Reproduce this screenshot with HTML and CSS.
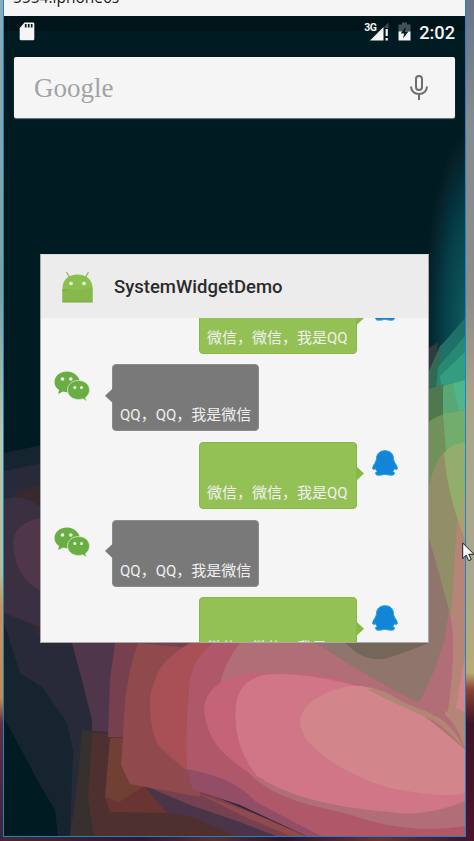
FILE: index.html
```
<!DOCTYPE html>
<html lang="zh-CN">
<head>
<meta charset="utf-8">
<title>SystemWidgetDemo</title>
<link rel="stylesheet" href="styles.css">
</head>
<body>
<svg class="defs" width="0" height="0" aria-hidden="true">
  <symbol id="wechat" viewBox="0 0 36 31">
    <path fill="#69ae42" d="M13 .5C6 .5.5 5 .5 11c0 3.500 1.800 6.200 4.600 8L4 23l5-2.500c1.500.5 3 .7 5 .7L26 11C25 5 19.500.5 13 .5z"/>
    <path fill="#69ae42" stroke="#d9e8d0" stroke-width=".8" d="M24.500 9.500C18 9.500 13.500 13.700 13.500 19s4.700 9.500 11 9.500c1.500 0 3-.3 4.300-.7l3.700 2.200-1-3.500c2.500-1.700 4-4.400 4-7.500 0-5.300-4.800-9.500-11-9.500z"/>
    <g fill="#f5f5f5"><circle cx="8.500" cy="8" r="1.800"/><circle cx="16.800" cy="8" r="1.800"/><circle cx="20.800" cy="16.500" r="1.500"/><circle cx="27.500" cy="16.500" r="1.500"/></g>
  </symbol>
  <symbol id="qq" viewBox="0 0 26 26">
    <path fill="#1285d8" stroke="#20a2dc" d="M13 .7C7.800.7 4.500 4 4.500 8.500c0 2-1 3.300-1.800 5C1.300 15.500.3 17.500.8 19c.5 1 1.800.2 2.700-.5.3 1.200.8 2.200 1.700 3-1.300.6-2 1.500-1.600 2.500.6 1.300 3 1.300 5.400 1.100L13 24.300l4 .8c2.400.2 4.800.2 5.400-1.100.4-1-.3-1.900-1.600-2.500.9-.8 1.400-1.800 1.700-3 .9.700 2.200 1.500 2.700.5.5-1.500-.5-3.500-1.900-5.500-.8-1.700-1.800-3-1.800-5C21.500 4 18.200.7 13 .7z"/>
  </symbol>
</svg>

<div class="desktop">
  <div class="edge edge-left"></div>
  <div class="window">
    <svg class="wallpaper" viewBox="4 16 461 820" preserveAspectRatio="none" aria-hidden="true">
      <defs>
        <radialGradient id="teal">
          <stop offset="0" stop-color="#187070"/>
          <stop offset=".3" stop-color="#0c5357"/>
          <stop offset=".6" stop-color="#063f48"/>
          <stop offset=".8" stop-color="#032c36"/>
          <stop offset=".9" stop-color="#082229"/>
          <stop offset="1" stop-color="#001b21"/>
        </radialGradient>
      </defs>
      <rect x="4" y="16" width="461" height="820" fill="#001b21"/>
      <rect x="4" y="16" width="461" height="15" fill="#00151a"/>
      <path fill="#15242f" d="M4 453L42 445V643L300 640V836H58L55 810 40 785 24 755 4 718z"/>
      <path fill="#282a3a" d="M4 471L42 463V643H300V836H70L73 750 67 723 43 688 20 673 4 622z"/>
      <path fill="#37292f" d="M15 494L42 483V642L20 605z"/>
      <path fill="#3b2f42" d="M4 500Q20 492 42 508V643H200V836H92V720L82 680 72 643 48 640 40 627 4 613z"/>
      <path fill="#50364a" d="M42 518Q13 522 13 545 16 580 42 591z"/>
      <path fill="#50364a" d="M72 643L82 680 92 720V750H150V643z"/>
      <path fill="#36302f" d="M82 730L108 732V836H70L76 795z"/>
      <path fill="#4e3030" d="M92 733H125L190 800 240 812V836H94L88 800z"/>
      <path fill="#77404f" d="M115 643H200V740L108 737 110 680z"/>
      <path fill="#704034" d="M110 738H130L155 790 118 803 105 797z"/>
      <path fill="#6a3433" d="M105 797L118 803 145 785 165 795 170 813 110 812z"/>
      <path fill="#4a3447" d="M143 785L220 800 300 836H235L195 818 167 813z"/>
      <path fill="#75404f" d="M143 785L200 790 270 820 305 836H276L240 822 190 805z"/>
      <path fill="#90494c" d="M138 643Q124 680 123 738L121 765 130 784 200 797 210 650z"/>
      <path fill="#90494c" d="M195 792L250 812 306 836H290L245 817z"/>
      <path fill="#a85055" d="M190 643Q160 660 155 680 150 692 150 702 150 730 158 745L174 760 190 773 240 680V643z"/>
      <path fill="#934d66" d="M187 768L240 780 325 836H306L240 805 192 789z"/>
      <path fill="#ae586a" d="M213 643Q190 660 189 690 185 730 187 769 235 778 255 801 280 815 321 836H465V643z"/>
      <path fill="#b16e77" d="M240 643Q222 665 218 695L240 760Q255 790 310 805 350 814 370 821 420 834 465 826V643z"/>
      <path fill="#c56479" d="M250 673Q205 680 204 710 207 742 233 761 260 785 320 800L380 806 400 700 330 676z"/>
      <path fill="#d07686" d="M275 674Q240 675 236 705 232 745 257 776 300 805 390 812 425 818 465 801V755L420 713Q350 674 275 674z"/>
      <path fill="#d2858b" d="M350 686Q305 695 300 720 300 737 318 751 345 775 390 788 445 799 465 793V750Q430 718 405 704 375 684 350 686z"/>
      <path fill="#8f756c" d="M316 643Q370 679 419 703 448 648 449 610V500H410V643z"/>
      <path fill="#746659" d="M345 643L357 653Q375 663 390 657 412 650 429 643z"/>
      <path fill="#b08774" d="M366 689Q382 687 400 701L430 713Q453 723 465 750 445 727 432 720 400 706 366 689z"/>
      <path fill="#b58678" d="M449 560L465 540V750Q458 725 445 715z"/>
      <path fill="#b16e77" d="M449 590Q458 640 448 711L434 716 419 703Q443 660 449 610z"/>
      <path fill="#d18489" d="M465 655L456 708 465 712z"/>
      <ellipse cx="475" cy="330" rx="52" ry="205" fill="url(#teal)"/>
      <path fill="#2d3c3e" d="M429 348L438 342 436 370 429 380z"/>
      <path fill="#326954" d="M429 371L440 346 450 337V460H429z"/>
      <path fill="#1f7069" d="M441 346L465 318V390L440 375z"/>
      <path fill="#278874" d="M438 367L465 336V400L436 390z"/>
      <path fill="#349c80" d="M440 376L465 352V410L443 400z"/>
      <path fill="#4e794f" d="M429 389L444 384V430L429 425z"/>
      <path fill="#57a875" d="M443 386L465 380V430L443 425z"/>
      <path fill="#50b58a" d="M453 384L465 380V410L460 415z"/>
      <path fill="#71905a" d="M429 422Q437 414 465 410V643H429z"/>
      <path fill="#73ad6d" d="M443 414L465 410V460L447 462z"/>
      <path fill="#93ad6c" d="M443 454Q452 443 465 442V545H450z"/>
      <path fill="#928e68" d="M429 487Q434 462 444 452 447 490 458 520L465 545V643H449L429 560z"/>
      <path fill="#ac9f71" d="M465 485V540L459 520z"/>
      <path fill="#8f756c" d="M429 538Q441 580 449 610 448 625 446 643H429z"/>
      <path fill="#b58678" d="M457 520L465 540V643H449L453 590z"/>
      <path fill="#b16e77" d="M449 610Q453 625 453 643H444z"/>
    </svg>

    <div class="titlebar"><span class="window-title">5554:iphone6s</span></div>
    <div class="statusbar">
      <svg class="sd" width="16" height="19" viewBox="0 0 16 19"><path fill="#f5f5f5" d="M5.500.5H14a1.300 1.300 0 0 1 1.300 1.300V17A1.300 1.300 0 0 1 14 18.300H2A1.300 1.300 0 0 1 .7 17V6z"/><path stroke="#001b21" stroke-width="1.700" d="M6.700 2v3.500M9.700 2v3.500M12.700 2v3.500"/></svg>
      <span class="network">3G</span>
      <svg class="signal" width="19" height="19" viewBox="0 0 19 19"><path fill="#394a50" d="M18.500.5V6h-4V4.500z"/><path fill="#f5f5f5" d="M0 18.500L13.500 5v13.500z"/><path fill="#f5f5f5" d="M15.600 7h2.200v7h-2.200zM15.600 16h2.200v2.500h-2.200z"/></svg>
      <svg class="battery" width="13" height="19" viewBox="0 0 13 19"><path fill="#455056" d="M.5 2.500H4V.5h5v2h3.500V10H.5z"/><path fill="#f5f5f5" d="M.5 9.500h12v9H.5z"/><path fill="#001b21" d="M8 4.500L2.700 11.500h3.500l-1.200 5 5.500-7H7z"/></svg>
      <span class="clock">2:02</span>
    </div>
    <div class="search">
      <span class="logo">Google</span>
      <svg class="mic" width="18" height="25" viewBox="0 0 18 25" fill="none" stroke="#6d6d6d"><rect x="6" y="1" width="6" height="14" rx="3" stroke-width="2"/><path stroke-width="2" d="M1 11.500c0 4.500 3.500 7.500 8 7.500s8-3 8-7.500M9 19v6"/></svg>
    </div>

    <div class="card">
      <div class="card-head">
        <svg width="31" height="32" viewBox="0 0 31 32"><path stroke="#8fb85f" stroke-width="1.300" d="M4.500 1L8 7M26.500 1L23 7"/><path fill="#8cc04e" d="M.5 31V17C.5 8.500 7 3.500 15.500 3.500S30.500 8.500 30.500 17V31z"/><path fill="#86b84b" d="M.5 19L13 19.500 30.500 16V31H.5z"/><path fill="#78a743" d="M.5 18.500l13 .3-13 1zM.5 30.500h30v1H.5z"/><g fill="#f4f8ee"><circle cx="9" cy="12.500" r="1.800"/><circle cx="22" cy="12.500" r="1.800"/></g></svg>
        <span class="card-title">SystemWidgetDemo</span>
      </div>
      <div class="chat">
        <div class="row mine"><div class="bubble">微信，微信，我是QQ</div><svg class="avatar"><use href="#qq"/></svg></div>
        <div class="row"><svg class="avatar"><use href="#wechat"/></svg><div class="bubble">QQ，QQ，我是微信</div></div>
        <div class="row mine"><div class="bubble">微信，微信，我是QQ</div><svg class="avatar"><use href="#qq"/></svg></div>
        <div class="row"><svg class="avatar"><use href="#wechat"/></svg><div class="bubble">QQ，QQ，我是微信</div></div>
        <div class="row mine"><div class="bubble">微信，微信，我是QQ</div><svg class="avatar"><use href="#qq"/></svg></div>
      </div>
    </div>
  </div>
  <div class="edge edge-right"></div>
  <svg class="cursor" width="13" height="20" viewBox="0 0 13 20"><path fill="#fafafa" stroke="#181c28" d="M.7 1v15.500l3.500-3.300 2.500 5.500 2.600-1.200-2.500-5.200h5.300z"/></svg>
</div>
</body>
</html>
```
FILE: styles.css
```
* { box-sizing: border-box; }
body {
  margin: 0;
  font-family: Roboto, "Noto Sans CJK SC", sans-serif;
}
.defs { position: absolute; }
.desktop {
  position: relative;
  display: flex;
  width: 474px;
  height: 841px;
  overflow: hidden;
  background: linear-gradient(90deg, #4a2630, #35172a 30%, #592e31 45%, #2e1528 60%, #6d3034 80%, #371727);
}
.edge-left {
  width: 3px;
  background: linear-gradient(#8dabb0, #7f9fa0 35%, #b8c6ae 52%, #b3bd9d 68%, #c79359 72%, #c18c50 83%, #632f42 86%, #3d2439);
}
.edge-right {
  width: 8px;
  background: linear-gradient(#68748a, #858d8e 15%, #8f8b89 35%, #aaa589 48%, #aaa98c 70%, #b8ab72 80%, #8a4136 82%, #3d1528 86%, #4a152c);
}
.window {
  position: relative;
  display: flex;
  flex-direction: column;
  width: 463px;
  height: 837px;
  border: 1px solid #1784cc;
  border-top: 0;
}
.wallpaper {
  position: absolute;
  left: 0;
  top: 16px;
  width: 461px;
  height: 820px;
}
.titlebar, .statusbar, .search, .card { position: relative; }
.titlebar {
  display: flex;
  align-items: flex-end;
  height: 16px;
  overflow: hidden;
  padding: 0 0 9px 9px;
  background: #f5f5f5;
}
.window-title {
  font: 15.5px/20px "Open Sans", sans-serif;
  color: #181818;
  white-space: nowrap;
}
.statusbar {
  display: flex;
  align-items: flex-start;
  height: 41px;
  padding: 6px 10px 0 15px;
  color: #f5f5f5;
}
.network {
  margin-left: auto;
  font-size: 10.5px;
  line-height: 11px;
  font-weight: 700;
  letter-spacing: -.6px;
}
.signal { margin-left: -6px; }
.battery { margin-left: 9px; }
.clock {
  margin-left: 8px;
  font-size: 18.2px;
  line-height: 22px;
  font-weight: 500;
}
.search {
  display: flex;
  align-items: center;
  justify-content: space-between;
  width: 441px;
  height: 61px;
  margin-left: 10px;
  padding: 0 27px 0 20px;
  border-radius: 2px;
  background: #f5f5f5;
  box-shadow: 0 1px 1px #708084;
}
.logo {
  font: 27px/30px "Liberation Serif", serif;
  color: #a3a3a3;
}
.mic { margin-bottom: 1px; }
.card {
  width: 389px;
  height: 389px;
  margin: 136px 0 0 36px;
  overflow: hidden;
  background: #f5f5f5;
  border: 1px solid #a7aaaa;
  border-top-color: #d9dddd;
}
.card-head {
  position: relative;
  z-index: 1;
  display: flex;
  align-items: center;
  gap: 21px;
  height: 63px;
  padding-left: 21px;
  background: #ececec;
}
.card-title {
  font-size: 18.5px;
  font-weight: 500;
  color: #2b2b2b;
}
.chat { margin-top: -31.5px; }
.row {
  display: flex;
  height: 77.7px;
  padding-left: 13px;
}
.row.mine {
  justify-content: flex-end;
  padding: 0 30px 0 0;
}
.avatar {
  width: 36px;
  height: 31px;
  margin: 7px 22px 0 0;
}
.mine .avatar {
  width: 26px;
  height: 26px;
  margin: 8px 0 0 15px;
}
.bubble {
  position: relative;
  display: flex;
  align-items: flex-end;
  width: 147px;
  height: 67px;
  padding: 0 0 5px 7px;
  border: 1px solid #8b8b8b;
  border-radius: 4px;
  background: #797979;
  color: #f0f0f0;
  font-size: 15px;
  line-height: 20px;
  white-space: nowrap;
}
.mine .bubble {
  width: 158px;
  border-color: #87b944;
  background: #94c156;
}
.bubble::before {
  content: "";
  position: absolute;
  top: 23px;
  left: -8px;
  width: 8px;
  height: 15px;
  background: #797979;
  clip-path: polygon(100% 0, 0 50%, 100% 100%);
}
.mine .bubble::before {
  left: auto;
  right: -8px;
  background: #87b944;
  clip-path: polygon(0 0, 100% 50%, 0 100%);
}
.cursor {
  position: absolute;
  left: 462px;
  top: 542px;
}
```
